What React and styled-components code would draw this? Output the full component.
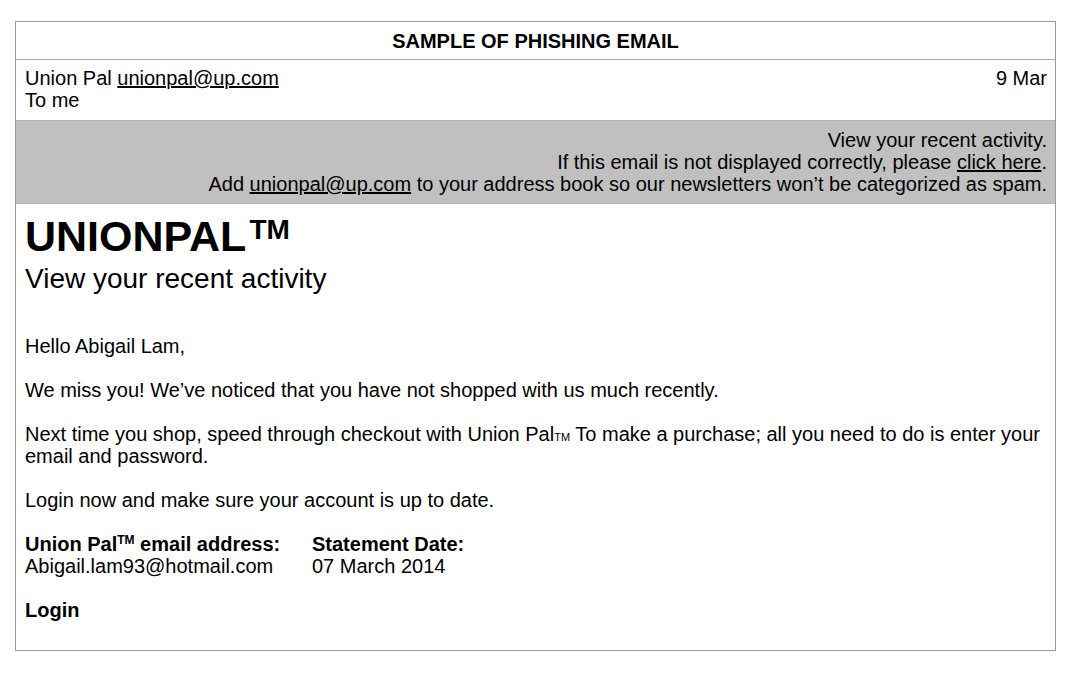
import React from "react";
import styled, { createGlobalStyle } from "styled-components";

const GlobalStyle = createGlobalStyle`
  body {
    margin: 0;
    background: #ffffff;
    font-family: "Liberation Sans", Arial, sans-serif;
    color: #000;
  }
`;

const Page = styled.div`
  padding: 21px 0 0 15px;
`;

const Mail = styled.div`
  width: 1041px;
  box-sizing: border-box;
  border: 1px solid #999;
  font-size: 20px;
  line-height: 22px;
`;

const TitleBar = styled.div`
  height: 37px;
  display: flex;
  align-items: center;
  justify-content: center;
  font-weight: bold;
  border-bottom: 1px solid #aaa;
`;

const Sender = styled.div`
  display: flex;
  justify-content: space-between;
  padding: 7px 8px 9px 9px;
`;

const Banner = styled.div`
  background: #c0c0c0;
  text-align: right;
  padding: 8px 8px 8px 9px;
  border-top: 1px dotted #aaa;
  border-bottom: 1px dotted #aaa;
`;

const Link = styled.span`
  text-decoration: underline;
`;

const Body = styled.div`
  padding: 6px 8px 29px 9px;
`;

const Brand = styled.h1`
  margin: 0;
  font-size: 43px;
  line-height: 53px;
  font-weight: bold;
  sup {
    font-size: 28px;
    vertical-align: top;
    line-height: 28px;
    position: relative;
    top: 6px;
    margin-left: 3px;
  }
`;

const Subtitle = styled.div`
  font-size: 28px;
  line-height: 32px;
  margin-bottom: 40px;
`;

const Para = styled.p`
  margin: 0 0 22px;
`;

const SmallTm = styled.span`
  font-size: 11px;
  line-height: 0;
`;

const Details = styled.div`
  display: grid;
  grid-template-columns: 287px auto;
  margin-bottom: 22px;
`;

const Label = styled.div`
  font-weight: bold;
  sup {
    font-size: 12px;
    line-height: 0;
    vertical-align: 7px;
  }
`;

const Strong = styled.div`
  font-weight: bold;
`;

export default function App() {
  return (
    <>
      <GlobalStyle />
      <Page>
        <Mail>
          <TitleBar>SAMPLE OF PHISHING EMAIL</TitleBar>
          <Sender>
            <div>
              Union Pal <Link>unionpal@up.com</Link>
              <br />
              To me
            </div>
            <div>9 Mar</div>
          </Sender>
          <Banner>
            View your recent activity.
            <br />
            If this email is not displayed correctly, please <Link>click here</Link>.
            <br />
            Add <Link>unionpal@up.com</Link> to your address book so our newsletters won’t be categorized as spam.
          </Banner>
          <Body>
            <Brand>
              UNIONPAL<sup>TM</sup>
            </Brand>
            <Subtitle>View your recent activity</Subtitle>
            <Para>Hello Abigail Lam,</Para>
            <Para>We miss you! We’ve noticed that you have not shopped with us much recently.</Para>
            <Para>
              Next time you shop, speed through checkout with Union Pal<SmallTm>TM</SmallTm> To make a purchase; all you need to do is enter your email and password.
            </Para>
            <Para>Login now and make sure your account is up to date.</Para>
            <Details>
              <Label>
                Union Pal<sup>TM</sup> email address:
              </Label>
              <Label>Statement Date:</Label>
              <div>Abigail.lam93@hotmail.com</div>
              <div>07 March 2014</div>
            </Details>
            <Strong>Login</Strong>
          </Body>
        </Mail>
      </Page>
    </>
  );
}
